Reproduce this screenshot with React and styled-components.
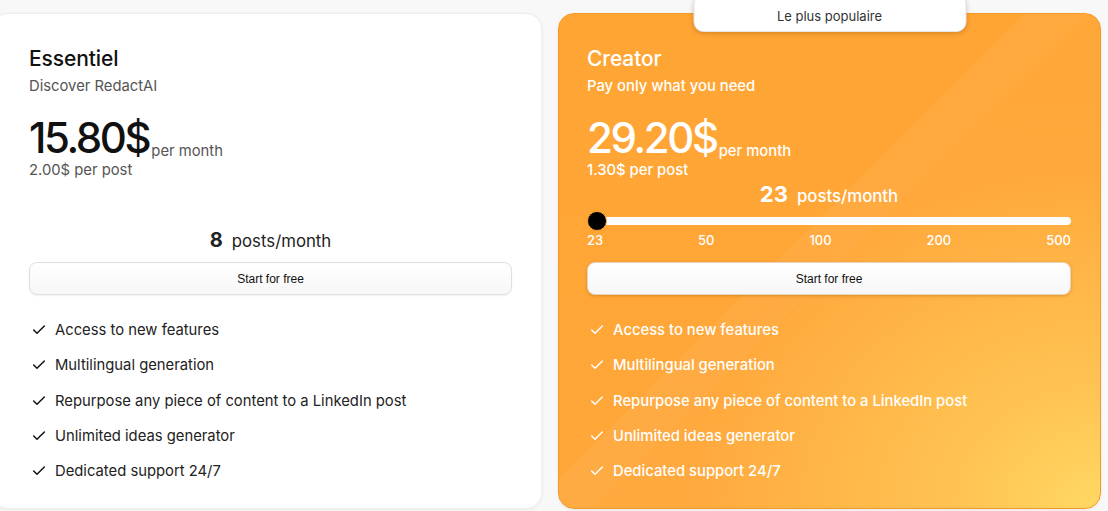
import React from "react";
import styled, { createGlobalStyle } from "styled-components";

const Global = createGlobalStyle`
  html, body { margin: 0; padding: 0; background: #f8f8f8; overflow: hidden; }
  body { font-family: Inter, "Noto Sans", sans-serif; -webkit-font-smoothing: antialiased; }
  * { box-sizing: border-box; }
`;

const Page = styled.div`
  display: flex;
  gap: 16px;
  padding: 13px 7px 2px 0;
  width: 1108px;
  height: 511px;
`;

const Card = styled.div`
  position: relative;
  flex: 0 0 ${(p) => p.$w}px;
  margin-left: ${(p) => p.$ml || 0}px;
  height: 496px;
  border-radius: 16px;
  padding: 31px 29px 0 ${(p) => p.$pl}px;
  display: flex;
  flex-direction: column;
  color: ${(p) => (p.$hot ? "#fff" : "#111")};
  background: ${(p) =>
    p.$hot
      ? `linear-gradient(135deg, transparent 0 45%, rgba(255,255,255,0.05) 45% 51%, rgba(255,255,255,0.025) 51% 100%),
         radial-gradient(ellipse 75% 70% at 100% 100%, #ffd75f 0%, #ffc24f 35%, rgba(255,170,60,0) 100%),
         linear-gradient(180deg, #ffa534 0%, #ffa73a 100%)`
      : "#fff"};
  border: 1px solid ${(p) => (p.$hot ? "#f59a28" : "#efefef")};
  box-shadow: ${(p) =>
    p.$hot ? "0 1px 3px rgba(0,0,0,0.08)" : "0 1px 4px rgba(0,0,0,0.06)"};
`;

const Badge = styled.div`
  position: absolute;
  top: -20px;
  left: 50%;
  transform: translateX(-50%);
  width: 273px;
  height: 38px;
  background: #fff;
  border: 1px solid #e6e6e6;
  border-radius: 10px;
  box-shadow: 0 2px 4px rgba(120, 60, 0, 0.25);
  display: flex;
  align-items: flex-end;
  justify-content: center;
  padding-bottom: 7px;
  font-size: 13px;
  line-height: 16px;
  color: #333;
`;

const Title = styled.div`
  font-size: 21px;
  line-height: 28px;
  font-weight: 500;
  letter-spacing: -0.1px;
`;

const Subtitle = styled.div`
  margin-top: 3px;
  font-size: 14.8px;
  line-height: 20px;
  color: ${(p) => (p.$hot ? "#fff" : "#555")};
  font-weight: ${(p) => (p.$hot ? 500 : 400)};
`;

const PriceRow = styled.div`
  margin-top: 21px;
  display: flex;
  align-items: flex-end;
`;

const Price = styled.span`
  font-size: 42px;
  line-height: 42px;
  font-weight: 500;
  letter-spacing: -2.4px;
`;

const PerMonth = styled.span`
  font-size: 14.8px;
  line-height: 16px;
  margin-left: 2px;
  color: ${(p) => (p.$hot ? "#fff" : "#555")};
  font-weight: ${(p) => (p.$hot ? 500 : 400)};
`;

const PerPost = styled.div`
  margin-top: 1px;
  font-size: 14.8px;
  line-height: 20px;
  color: ${(p) => (p.$hot ? "#fff" : "#555")};
  font-weight: ${(p) => (p.$hot ? 500 : 400)};
`;

const Middle = styled.div`
  height: 82px;
  display: flex;
  flex-direction: column;
  justify-content: flex-end;
  padding-bottom: ${(p) => p.$pb}px;
`;

const Posts = styled.div`
  display: flex;
  justify-content: center;
  align-items: baseline;
  gap: 9px;
  line-height: 28px;
  font-size: 16.8px;
  color: ${(p) => (p.$hot ? "#fff" : "#222")};
  font-weight: ${(p) => (p.$hot ? 500 : 400)};
`;

const PostsNum = styled.span`
  font-size: ${(p) => p.$size}px;
  font-weight: 700;
`;

const SliderBox = styled.div`
  position: relative;
  height: 22px;
  display: flex;
  align-items: center;
`;

const Track = styled.div`
  margin-left: 10px;
  flex: 1;
  height: 8px;
  border-radius: 4px;
  background: #fff;
`;

const Thumb = styled.div`
  position: absolute;
  left: 0;
  top: 1px;
  width: 20px;
  height: 20px;
  border-radius: 50%;
  background: #000;
  border: 1px solid #f5a235;
`;

const Ticks = styled.div`
  display: flex;
  justify-content: space-between;
  font-size: 13px;
  line-height: 16px;
  font-weight: 500;
  color: #fff;
`;

const Button = styled.button`
  height: 33px;
  width: 100%;
  border-radius: 8px;
  border: 1px solid ${(p) => (p.$hot ? "#e8d6bd" : "#dedede")};
  background: linear-gradient(180deg, #ffffff 0%, #f7f7f7 100%);
  box-shadow: ${(p) =>
    p.$hot ? "0 1px 3px rgba(150,80,0,0.35)" : "0 1px 2px rgba(0,0,0,0.06)"};
  font-family: "Liberation Sans", Arial, sans-serif;
  font-size: 12px;
  color: #111;
  padding: 0;
`;

const Features = styled.ul`
  list-style: none;
  margin: 25px 0 0;
  padding: 0 0 0 2px;
  display: flex;
  flex-direction: column;
  gap: 15.3px;
`;

const Feature = styled.li`
  display: flex;
  align-items: center;
  gap: 8px;
  font-size: 14.8px;
  line-height: 20px;
  color: ${(p) => (p.$hot ? "#fff" : "#222")};
  font-weight: ${(p) => (p.$hot ? 500 : 400)};
`;

const CheckIcon = ({ color }) => (
  <svg width="16" height="16" viewBox="0 0 24 24" fill="none" stroke={color} strokeWidth="2.2" strokeLinecap="round" strokeLinejoin="round">
    <path d="M20 6 9 17l-5-5" />
  </svg>
);

const features = [
  "Access to new features",
  "Multilingual generation",
  "Repurpose any piece of content to a LinkedIn post",
  "Unlimited ideas generator",
  "Dedicated support 24/7",
];

const FeatureList = ({ hot }) => (
  <Features>
    {features.map((f) => (
      <Feature key={f} $hot={hot}>
        <CheckIcon color={hot ? "#fff" : "#111"} />
        {f}
      </Feature>
    ))}
  </Features>
);

export default function App() {
  return (
    <>
      <Global />
      <Page>
        <Card $w={550} $ml={-8} $pl={36}>
          <Title>Essentiel</Title>
          <Subtitle>Discover RedactAI</Subtitle>
          <PriceRow>
            <Price>15.80$</Price>
            <PerMonth>per month</PerMonth>
          </PriceRow>
          <PerPost>2.00$ per post</PerPost>
          <Middle $pb={7}>
            <Posts>
              <PostsNum $size={20}>8</PostsNum>
              posts/month
            </Posts>
          </Middle>
          <Button>Start for free</Button>
          <FeatureList />
        </Card>
        <Card $w={543} $pl={28} $hot>
          <Badge>Le plus populaire</Badge>
          <Title>Creator</Title>
          <Subtitle $hot>Pay only what you need</Subtitle>
          <PriceRow>
            <Price>29.20$</Price>
            <PerMonth $hot>per month</PerMonth>
          </PriceRow>
          <PerPost $hot>1.30$ per post</PerPost>
          <Middle $pb={14}>
            <Posts $hot>
              <PostsNum $size={22}>23</PostsNum>
              posts/month
            </Posts>
            <SliderBox>
              <Track />
              <Thumb />
            </SliderBox>
            <Ticks>
              <span>23</span>
              <span>50</span>
              <span>100</span>
              <span>200</span>
              <span>500</span>
            </Ticks>
          </Middle>
          <Button $hot>Start for free</Button>
          <FeatureList hot />
        </Card>
      </Page>
    </>
  );
}
